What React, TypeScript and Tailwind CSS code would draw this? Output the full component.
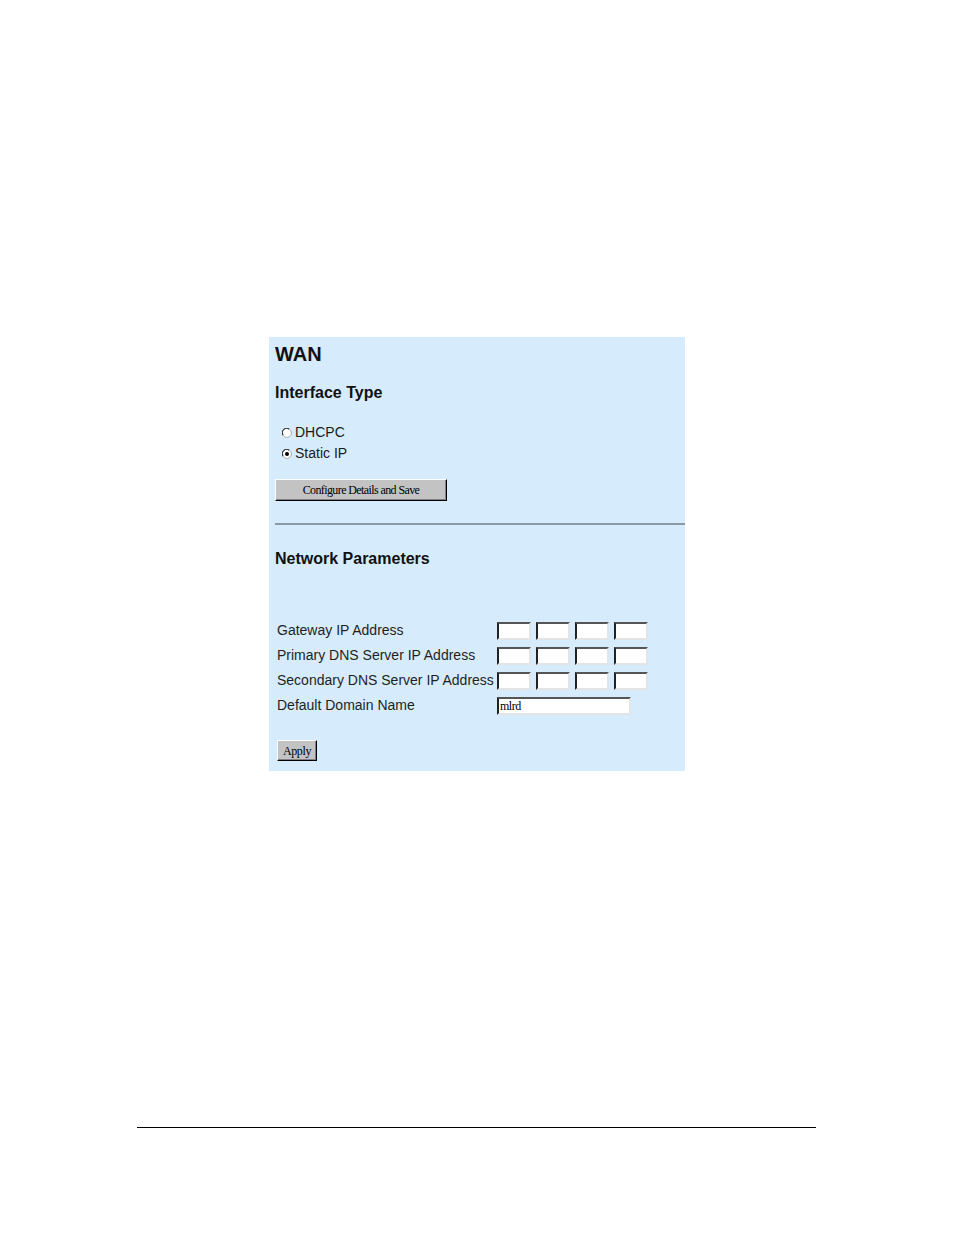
const sans = { fontFamily: '"Liberation Sans", Arial, sans-serif' };

function Radio({ checked, label }: { checked: boolean; label: string }) {
  return (
    <label className="flex h-[21px] items-center text-[14px] leading-[21px] text-[#1a1a1a]">
      <svg width="10" height="10" viewBox="0 0 10 10" className="mr-[3px]">
        <circle cx="5" cy="5" r="4.5" fill="#ffffff" />
        <path d="M1.2 7.2 A4.3 4.3 0 0 1 7.2 1.2" fill="none" stroke="#303030" strokeWidth="1.1" />
        <path d="M7.2 1.2 A4.3 4.3 0 0 1 7.2 8.8 A4.3 4.3 0 0 1 1.2 7.2" fill="none" stroke="#a8a8a8" strokeWidth="1" />
        {checked ? <circle cx="5" cy="5" r="2" fill="#000000" /> : null}
      </svg>
      {label}
    </label>
  );
}

function IpBox() {
  return (
    <div className="h-[18px] w-[34px] border-2 border-t-[#555555] border-l-[#222222] border-b-[#e4e4e4] border-r-[#e4e4e4] bg-white" />
  );
}

function IpRow({ label }: { label: string }) {
  return (
    <div className="flex h-[25px] items-center">
      <span className="w-[220px] whitespace-nowrap text-[14px] text-[#1f1f1f]">{label}</span>
      <div className="flex gap-[5px]">
        <IpBox />
        <IpBox />
        <IpBox />
        <IpBox />
      </div>
    </div>
  );
}

function ClassicButton({ children, className }: { children: string; className: string }) {
  return (
    <button
      type="button"
      className={`flex items-center justify-center border border-t-white border-l-white border-b-black border-r-black bg-[#c3c3c3] font-['Liberation_Serif',serif] text-[12px] leading-none text-black shadow-[inset_-1px_-1px_0_#808080] ${className}`}
    >
      {children}
    </button>
  );
}

export default function App() {
  return (
    <div className="min-h-[1235px] w-[954px] overflow-hidden bg-white pt-[337px]" style={sans}>
      <section className="ml-[269px] h-[434px] w-[416px] bg-[#d6ecfc] pt-[7px]">
        <h1 className="pl-[6px] text-[20px] font-bold leading-none text-[#111]">WAN</h1>
        <h2 className="mt-[21px] pl-[6px] text-[16px] font-bold leading-none text-[#111]">Interface Type</h2>

        <div className="mt-[21px] pl-[13px]">
          <Radio checked={false} label="DHCPC" />
          <Radio checked label="Static IP" />
        </div>

        <div className="mt-[15px] pl-[6px]">
          <ClassicButton className="h-[22px] w-[172px] tracking-[-0.05em]">Configure Details and Save</ClassicButton>
        </div>

        <div className="ml-[6px] mt-[22px] h-[2px] bg-[#8c99a4]" />

        <h2 className="mt-[26px] pl-[6px] text-[16px] font-bold leading-none text-[#111]">Network Parameters</h2>

        <div className="mt-[51px] pl-[8px]">
          <IpRow label="Gateway IP Address" />
          <IpRow label="Primary DNS Server IP Address" />
          <IpRow label="Secondary DNS Server IP Address" />
          <div className="flex h-[25px] items-center">
            <span className="w-[220px] whitespace-nowrap text-[14px] text-[#1f1f1f]">Default Domain Name</span>
            <div className="flex h-[18px] w-[134px] items-center border-2 border-t-[#555555] border-l-[#222222] border-b-[#e4e4e4] border-r-[#e4e4e4] bg-white pl-[1px] font-['Liberation_Serif',serif] text-[12px] leading-none tracking-[-0.04em] text-black">
              mlrd
            </div>
          </div>
        </div>

        <div className="mt-[22px] pl-[8px]">
          <ClassicButton className="h-[21px] w-[40px] tracking-[-0.03em]">Apply</ClassicButton>
        </div>
      </section>

      <div className="ml-[137px] mt-[356px] h-px w-[679px] bg-black" />
    </div>
  );
}
